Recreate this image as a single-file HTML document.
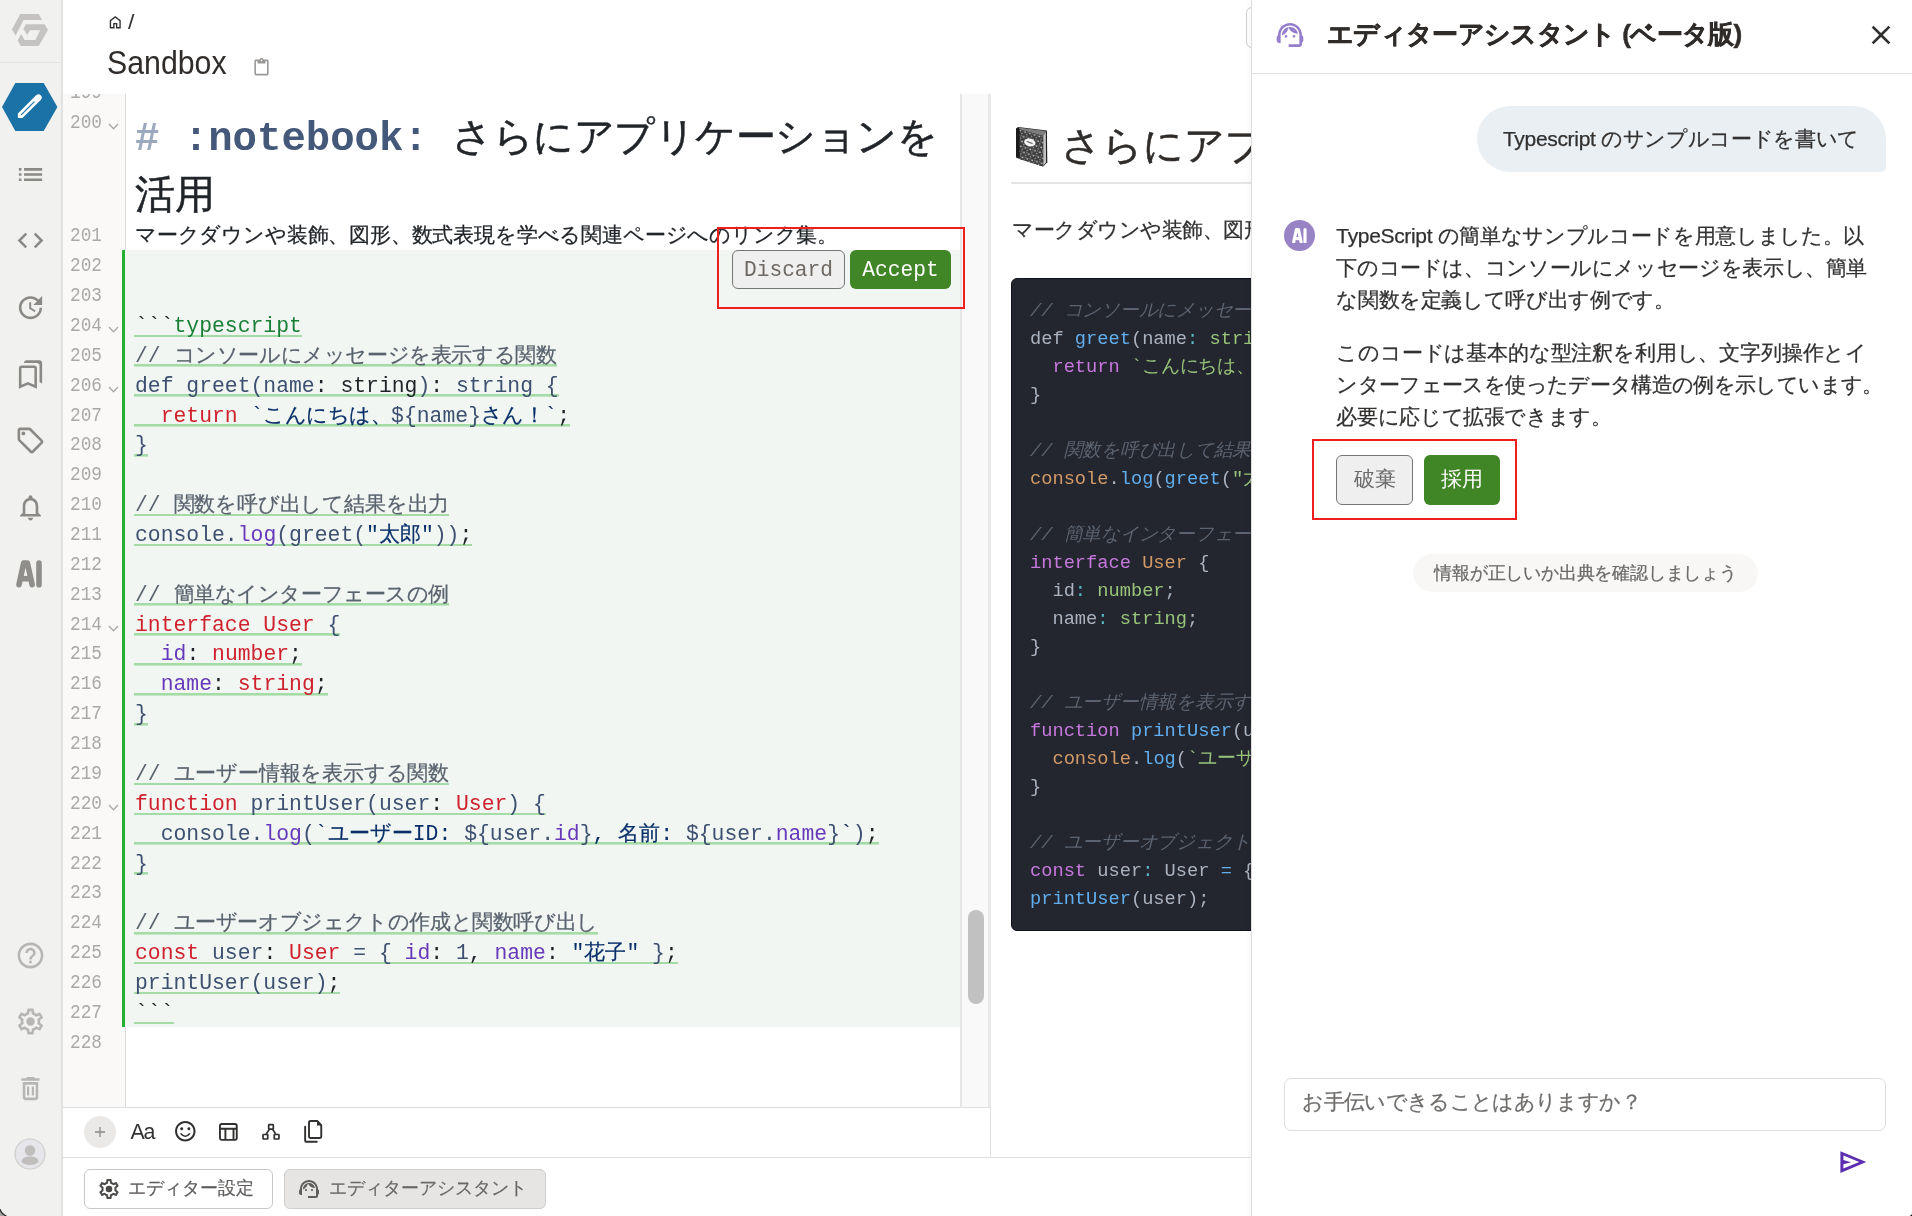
<!DOCTYPE html>
<html lang="ja">
<head>
<meta charset="utf-8">
<title>Sandbox - GROWI</title>
<style>
*{box-sizing:border-box;margin:0;padding:0}
html,body{width:1912px;height:1216px;overflow:hidden;background:#fff}
body{position:relative;will-change:transform;font-family:"Liberation Sans",sans-serif;color:#323130}
.abs{position:absolute}
svg{display:block}
.nw{white-space:nowrap}
.msg,#bubble,.cl .cj,#hint,#input,.jp{-webkit-text-stroke:.25px currentColor}
#h1 .cj{-webkit-text-stroke:.5px currentColor}
/* ---------- sidebar ---------- */
#sidebar{position:absolute;left:0;top:0;width:63px;height:1216px;background:#f1f1ef;border-right:2px solid #e3e2e0}
#sidebar .sep{position:absolute;left:0;top:62px;width:61px;height:1px;background:#e4e3e1}
#sidebar .ic{position:absolute;left:14.5px;width:31px;height:31px}
/* ---------- header ---------- */
#crumb{position:absolute;left:128px;top:11px;font-size:20px;line-height:22px;transform:scaleX(1.15);transform-origin:0 0;color:#323130;white-space:nowrap}
#title{position:absolute;left:107px;top:41px;font-size:32.5px;line-height:44px;color:#2f2c2a;white-space:nowrap;transform:scaleX(.932);transform-origin:0 50%}
/* ---------- editor ---------- */
#editor{position:absolute;left:63px;top:94px;width:897px;height:1013px;overflow:hidden;background:#fff}
#gutter{position:absolute;left:0;top:0;width:63px;height:1013px;background:#faf9f7;border-right:1px solid #dcdcdc}
.ln{position:absolute;left:0;width:39px;text-align:right;font-family:"Liberation Mono",monospace;font-size:17.8px;line-height:29.87px;height:29.87px;color:#a9a9a9;white-space:pre;transform:scaleY(1.1);transform-origin:0 21px;padding-top:2px}
.fold{position:absolute;left:45px}
#insbg{position:absolute;left:59px;width:839px;background:#f2f6f3;border-left:3px solid #24b030}
.cl{position:absolute;left:72px;height:29.87px;font-family:"Liberation Mono",monospace;font-size:21.4px;line-height:29.87px;white-space:pre;color:#3d5070}
.cl .u{display:inline-block;height:27.3px;line-height:32.5px;background:linear-gradient(#a4dba6,#a4dba6) left bottom/100% 2.6px no-repeat;margin-left:-1px;padding-left:1px;vertical-align:top}
.cj{font-family:"Liberation Sans",sans-serif;font-size:21.2px;line-height:0}
.k{color:#cf222e}.p{color:#6639ba}.s{color:#0a3069}.c{color:#59636e}.d{color:#1f2328}.g{color:#1a7f37}.n{color:#0550ae}
#h1{position:absolute;left:72px;font-family:"Liberation Mono",monospace;font-weight:bold;font-size:40.67px;line-height:58px;white-space:pre;color:#44597a}
#h1 .hs{color:#9ba8bd}
#h1 .cj{font-family:"Liberation Sans",sans-serif;font-weight:normal;font-size:40px;color:#212529;line-height:0;letter-spacing:-.47px}
.btn{position:absolute;border-radius:6px;text-align:center;white-space:nowrap}
#redbox1{position:absolute;left:717px;top:227px;width:248px;height:82px;border:2px solid #f01e1e}
#vsb{position:absolute;left:960px;top:94px;width:31px;height:1013px;background:#f9f9f9;border-left:2px solid #e6e6e6;border-right:3px solid #e8e8e8}
#vsb i{position:absolute;left:6px;top:816px;width:16px;height:94px;border-radius:8px;background:#c1c1c1}
/* ---------- toolbar ---------- */
#tb1{position:absolute;left:63px;top:1107px;width:928px;height:50px;border-top:1px solid #dfdfdf;border-right:1px solid #e2e2e2;background:#fff}
#tb2{position:absolute;left:63px;top:1157px;width:1188px;height:59px;border-top:1px solid #dfdfdf;background:#fff}
/* ---------- preview ---------- */
#preview{position:absolute;left:991px;top:94px;width:260px;height:1063px;overflow:hidden;background:#fff}
#pcode{position:absolute;left:20px;top:184px;width:300px;height:653px;background:#23262f;border:1px solid #10131b;border-radius:6px;font-family:"Liberation Mono",monospace;font-size:18.7px;line-height:28px;color:#abb2bf;white-space:pre;padding:18px 0 0 18px}
#pcode .cj{font-family:"Liberation Sans",sans-serif;font-size:18.67px;line-height:0;letter-spacing:-.25px}
#pcode .c{color:#5c6370;font-style:italic}.pk{color:#c678dd}.pf{color:#61aeee}.pg{color:#98c379}.po{color:#d19a66}.pb{color:#56b6c2}
/* ---------- assistant panel ---------- */
#panel{position:absolute;left:1251px;top:0;width:661px;height:1216px;background:#fff;border-left:1px solid #e0dfdd;box-shadow:-2px 0 4px rgba(0,0,0,.035)}
#phead{position:absolute;left:0;top:0;width:660px;height:74px;border-bottom:1px solid #e1e1e1}
#ptitle{position:absolute;left:75px;top:14px;font-size:26.2px;font-weight:bold;line-height:40px;color:#2f2c2a;white-space:nowrap;letter-spacing:-.67px;-webkit-text-stroke:.45px #2f2c2a}
#bubble{position:absolute;left:225px;top:106px;width:409px;height:66px;border-radius:33px 33px 5px 33px;background:#eaeff4;font-size:21px;line-height:66px;text-indent:26px;color:#323130;white-space:nowrap;letter-spacing:-.32px}
#ai{position:absolute;left:32px;top:220px;width:31px;height:31px;border-radius:50%;background:#9883c5;color:#fff;font-weight:bold;font-size:15px;line-height:31px;text-align:center}
.msg{position:absolute;left:84.300px;font-size:21px;line-height:32px;color:#323130;white-space:nowrap}
#redbox2{position:absolute;left:60px;top:439px;width:205px;height:81px;border:2px solid #f01e1e}
#hint{position:absolute;left:161px;top:554px;width:345px;letter-spacing:-.2px;height:38px;border-radius:19px;background:#f8f7f6;color:#6c6a68;font-size:17.7px;line-height:38px;text-align:center;white-space:nowrap}
#input{position:absolute;left:32.300px;top:1078px;width:602px;height:53px;border:1px solid #dddddd;border-radius:7px;font-size:21px;line-height:45px;color:#6f6d6b;padding-left:17px;white-space:nowrap;letter-spacing:-.65px}
</style>
</head>
<body>

<div class="abs" style="left:106.800px;top:13.800px"><svg width="16.5" height="16.5" viewBox="0 0 24 24" ><path fill="#323130" fill-rule="evenodd" d="M6 19h3v-6h6v6h3v-9l-6-4.500L6 10v9zm-2 2V9l8-6 8 6v12h-7v-6h-2v6H4z"/></svg></div>
<div id="crumb">/</div>
<div id="title">Sandbox</div>
<div class="abs" style="left:251.700px;top:57.600px"><svg width="19" height="19" viewBox="0 0 24 24" ><path fill="#9a9896" fill-rule="evenodd" d="M19 2h-4.180C14.400.840 13.300 0 12 0S9.600.840 9.180 2H5c-1.100 0-2 .900-2 2v16c0 1.100.900 2 2 2h14c1.100 0 2-.900 2-2V4c0-1.100-.900-2-2-2zm-7 0c.550 0 1 .450 1 1s-.450 1-1 1-1-.450-1-1 .450-1 1-1zm7 18H5V4h2v3h10V4h2v16z"/></svg></div>
<div class="abs" style="left:1246px;top:7px;width:60px;height:41px;border:1px solid #cdcccb;border-radius:6px;background:#fff"></div>
<div id="editor">
<div id="gutter"></div>
<div id="insbg" style="top:156.17px;height:776.62px"></div>
<div class="ln" style="top:-16.57px">199</div>
<div class="ln" style="top:12.70px">200</div>
<div class="ln" style="top:126.30px">201</div>
<div class="ln" style="top:156.17px">202</div>
<div class="ln" style="top:186.04px">203</div>
<div class="ln" style="top:215.91px">204</div>
<div class="ln" style="top:245.78px">205</div>
<div class="ln" style="top:275.65px">206</div>
<div class="ln" style="top:305.52px">207</div>
<div class="ln" style="top:335.39px">208</div>
<div class="ln" style="top:365.26px">209</div>
<div class="ln" style="top:395.13px">210</div>
<div class="ln" style="top:425.00px">211</div>
<div class="ln" style="top:454.87px">212</div>
<div class="ln" style="top:484.74px">213</div>
<div class="ln" style="top:514.61px">214</div>
<div class="ln" style="top:544.48px">215</div>
<div class="ln" style="top:574.35px">216</div>
<div class="ln" style="top:604.22px">217</div>
<div class="ln" style="top:634.09px">218</div>
<div class="ln" style="top:663.96px">219</div>
<div class="ln" style="top:693.83px">220</div>
<div class="ln" style="top:723.70px">221</div>
<div class="ln" style="top:753.57px">222</div>
<div class="ln" style="top:783.44px">223</div>
<div class="ln" style="top:813.31px">224</div>
<div class="ln" style="top:843.18px">225</div>
<div class="ln" style="top:873.05px">226</div>
<div class="ln" style="top:902.92px">227</div>
<div class="ln" style="top:932.79px">228</div>
<svg class="fold" style="top:29.20px" width="11" height="7" viewBox="0 0 11 7"><path d="M1 1L5.500 5.800L10 1" fill="none" stroke="#a9a9a9" stroke-width="1.300"/></svg>
<svg class="fold" style="top:232.41px" width="11" height="7" viewBox="0 0 11 7"><path d="M1 1L5.500 5.800L10 1" fill="none" stroke="#a9a9a9" stroke-width="1.300"/></svg>
<svg class="fold" style="top:292.15px" width="11" height="7" viewBox="0 0 11 7"><path d="M1 1L5.500 5.800L10 1" fill="none" stroke="#a9a9a9" stroke-width="1.300"/></svg>
<svg class="fold" style="top:531.11px" width="11" height="7" viewBox="0 0 11 7"><path d="M1 1L5.500 5.800L10 1" fill="none" stroke="#a9a9a9" stroke-width="1.300"/></svg>
<svg class="fold" style="top:710.33px" width="11" height="7" viewBox="0 0 11 7"><path d="M1 1L5.500 5.800L10 1" fill="none" stroke="#a9a9a9" stroke-width="1.300"/></svg>
<div id="h1" style="top:15.80px"><span class="hs">#</span> :notebook: <span class="cj">さらにアプリケーションを</span><br><span class="cj">活用</span></div>
<div class="cl" style="top:127.80px;color:#212529"><span class="cj" style="letter-spacing:-0.18px">マークダウンや装飾、図形、数式表現を学べる関連ページへのリンク集。</span></div>
<div class="cl" style="top:215.91px"><span class="u"><span class="d">```</span><span class="g">typescript</span></span></div>
<div class="cl" style="top:245.78px"><span class="u"><span class="c">// <span class="cj" style="letter-spacing:-0.39px">コンソールにメッセージを表示する関数</span></span></span></div>
<div class="cl" style="top:275.65px"><span class="u">def greet(name<span class="d">: string</span>)<span class="d">:</span> string {</span></div>
<div class="cl" style="top:305.52px"><span class="u">  <span class="k">return</span> <span class="s">`<span class="cj" style="letter-spacing:-0.55px">こんにちは、</span></span>${name}<span class="s"><span class="cj" style="letter-spacing:-0.55px">さん！</span>`</span><span class="d">;</span></span></div>
<div class="cl" style="top:335.39px"><span class="u">}</span></div>
<div class="cl" style="top:395.13px"><span class="u"><span class="c">// <span class="cj" style="letter-spacing:-0.18px">関数を呼び出して結果を出力</span></span></span></div>
<div class="cl" style="top:425.00px"><span class="u">console.<span class="p">log</span>(greet(<span class="s">"<span class="cj">太郎</span>"</span>))<span class="d">;</span></span></div>
<div class="cl" style="top:484.74px"><span class="u"><span class="c">// <span class="cj" style="letter-spacing:-0.42px">簡単なインターフェースの例</span></span></span></div>
<div class="cl" style="top:514.61px"><span class="u"><span class="k">interface User</span> {</span></div>
<div class="cl" style="top:544.48px"><span class="u">  <span class="p">id</span><span class="d">: </span><span class="k">number</span><span class="d">;</span></span></div>
<div class="cl" style="top:574.35px"><span class="u">  <span class="p">name</span><span class="d">: </span><span class="k">string</span><span class="d">;</span></span></div>
<div class="cl" style="top:604.22px"><span class="u">}</span></div>
<div class="cl" style="top:663.96px"><span class="u"><span class="c">// <span class="cj" style="letter-spacing:-0.2px">ユーザー情報を表示する関数</span></span></span></div>
<div class="cl" style="top:693.83px"><span class="u"><span class="k">function</span> printUser(user<span class="d">: </span><span class="k">User</span>) {</span></div>
<div class="cl" style="top:723.70px"><span class="u">  console.<span class="p">log</span>(<span class="s">`<span class="cj" style="letter-spacing:-0.2px">ユーザー</span>ID: </span>${user.<span class="p">id</span>}<span class="s">, <span class="cj">名前</span>: </span>${user.<span class="p">name</span>}<span class="s">`</span>)<span class="d">;</span></span></div>
<div class="cl" style="top:753.57px"><span class="u">}</span></div>
<div class="cl" style="top:813.31px"><span class="u"><span class="c">// <span class="cj" style="letter-spacing:-0.385px">ユーザーオブジェクトの作成と関数呼び出し</span></span></span></div>
<div class="cl" style="top:843.18px"><span class="u"><span class="k">const</span> user<span class="d">: </span><span class="k">User</span> = { <span class="p">id</span><span class="d">: </span>1<span class="d">, </span><span class="p">name</span><span class="d">: </span><span class="s">"<span class="cj">花子</span>"</span> }<span class="d">;</span></span></div>
<div class="cl" style="top:873.05px"><span class="u">printUser(user)<span class="d">;</span></span></div>
<div class="cl" style="top:902.92px"><span class="u"><span class="d">```</span></span></div>
</div>
<div class="btn" style="left:732px;top:250px;width:113px;height:39px;background:#efefef;border:1px solid #767676;color:#6e6863;font-family:'Liberation Mono',monospace;font-size:21.2px;line-height:39px">Discard</div>
<div class="btn" style="left:850px;top:250px;width:101px;height:39px;background:#408526;color:#fff;font-family:'Liberation Mono',monospace;font-size:21.2px;line-height:41px">Accept</div>
<div id="vsb"><i></i></div>
<div id="redbox1"></div>
<div id="preview">
<div class="abs nw" style="left:69.500px;top:22.800px;font-size:40px;line-height:56px;color:#2f2c2a;-webkit-text-stroke:.5px #2f2c2a">さらにアプリ</div>
<svg class="abs" style="left:19px;top:32px" width="40" height="42" viewBox="0 0 40 42"><defs><pattern id="mb" width="5" height="5" patternUnits="userSpaceOnUse" patternTransform="rotate(17)"><rect width="5" height="5" fill="#3a3a3a"/><circle cx="1.200" cy="1.300" r=".900" fill="#d2d2d2"/><circle cx="3.600" cy="3.500" r=".800" fill="#adadad"/><circle cx="3.900" cy=".800" r=".500" fill="#e4e4e4"/></pattern></defs><path d="M6 2.600L8 1L36.900 4.400L37.300 36.200L33.200 40.400L9.700 33L6 31.600Z" fill="#1c1c1c"/><path d="M9.700 3.500L8.600 1.600L36 4.900L33.200 10Z" fill="#7d7d7d"/><path d="M33.200 10L35.800 5.800L36.100 36.200L33.200 40Z" fill="#c4c4c4"/><path d="M9.700 3.500L33.200 10V40.400L9.700 33Z" fill="url(#mb)"/><ellipse cx="19.800" cy="16.500" rx="5.700" ry="3.800" fill="#f4f4f4" transform="rotate(12 19.800 16.500)"/><path d="M16.800 15.300L22.600 17.700" stroke="#777" stroke-width="1.400"/></svg>
<div class="abs" style="left:20px;top:88px;width:260px;height:2px;background:#e4e4e4"></div>
<div class="abs nw" style="left:21px;top:120px;font-size:21.300px;line-height:32px;color:#323130;letter-spacing:-.5px;-webkit-text-stroke:.25px #323130">マークダウンや装飾、図形、数式</div>
<div id="pcode"><span class="c">// <span class="cj">コンソールにメッセージを表示する関数</span></span>
def <span class="pf">greet</span>(name<span class="pb">:</span> <span class="pg">string</span>)
  <span class="pk">return</span> <span class="pg">`<span class="cj">こんにちは、</span>${name}</span>
}

<span class="c">// <span class="cj">関数を呼び出して結果を出力</span></span>
<span class="po">console</span>.<span class="pf">log</span>(<span class="pf">greet</span>(<span class="pg">"<span class="cj">太郎</span>"</span>));

<span class="c">// <span class="cj">簡単なインターフェースの例</span></span>
<span class="pk">interface</span> <span class="po">User</span> {
  id<span class="pb">:</span> <span class="pg">number</span>;
  name<span class="pb">:</span> <span class="pg">string</span>;
}

<span class="c">// <span class="cj">ユーザー情報を表示する関数</span></span>
<span class="pk">function</span> <span class="pf">printUser</span>(user<span class="pb">:</span> User) {
  <span class="po">console</span>.<span class="pf">log</span>(<span class="pg">`<span class="cj">ユーザー</span>ID: ${user.id}</span>
}

<span class="c">// <span class="cj">ユーザーオブジェクトの作成と関数呼び出し</span></span>
<span class="pk">const</span> user<span class="pb">:</span> User <span class="pf">=</span> { id: 1 };
<span class="pf">printUser</span>(user);</div>
</div>
<div id="tb1">
<div class="abs" style="left:21px;top:8px;width:32px;height:32px;border-radius:50%;background:#eae9e7"></div>
<svg class="abs" style="left:31px;top:18px" width="12" height="12" viewBox="0 0 12 12"><path d="M6 1V11M1 6H11" stroke="#8a8886" stroke-width="1.300" fill="none"/></svg>
<div class="abs nw" style="left:67.500px;top:10.200px;font-size:21.4px;line-height:28px;color:#323130;letter-spacing:-1.2px">Aa</div>
<div class="abs" style="left:110.200px;top:11px"><svg width="24.6" height="24.6" viewBox="0 0 24 24" ><path fill="#323130" fill-rule="evenodd" d="M15.500 11c.830 0 1.500-.670 1.500-1.500S16.330 8 15.500 8 14 8.670 14 9.500s.670 1.500 1.500 1.500zm-7 0c.830 0 1.500-.670 1.500-1.500S9.330 8 8.500 8 7 8.670 7 9.500 7.670 11 8.500 11zM12 16c-1.480 0-2.750-.810-3.450-2H6.880c.800 2.050 2.790 3.500 5.120 3.500s4.320-1.450 5.120-3.500h-1.670c-.690 1.190-1.970 2-3.450 2zm-.010-14C6.470 2 2 6.480 2 12s4.470 10 9.990 10C17.520 22 22 17.520 22 12S17.520 2 11.990 2zM12 20c-4.420 0-8-3.580-8-8s3.580-8 8-8 8 3.580 8 8-3.580 8-8 8z"/></svg></div>
<svg class="abs" style="left:155px;top:14.200px" width="20" height="20" viewBox="0 0 20 20"><g fill="none" stroke="#323130" stroke-width="1.900"><rect x="1.950" y="1.950" width="16.800" height="15.900" rx="1.800"/><path d="M1.950 6.700H18.750M7.400 6.700V17.800M15.500 6.700V17.800"/></g></svg>
<svg class="abs" style="left:198px;top:14.600px" width="20" height="18" viewBox="0 0 20 18"><g fill="none" stroke="#323130" stroke-width="1.700"><rect x="7.700" y="1.700" width="4.600" height="4.400" rx=".400"/><rect x="2.050" y="11.500" width="4.700" height="4.500" rx=".400"/><rect x="13.250" y="11.500" width="4.700" height="4.500" rx=".400"/><path d="M8.200 6.600L5.300 11M11.800 6.600L14.700 11"/></g></svg>
<svg class="abs" style="left:240px;top:10.800px" width="21" height="25.200" viewBox="0 0 21 24" preserveAspectRatio="none"><g fill="none" stroke="#323130" stroke-width="1.900" stroke-linejoin="round"><path d="M7.500 1.950H14.300L18.250 5.900V16.600a1.500 1.500 0 0 1 -1.500 1.500H7.500a1.500 1.500 0 0 1 -1.500 -1.500V3.450a1.500 1.500 0 0 1 1.500 -1.500Z"/><path d="M2.150 7.400V20.200a1.500 1.500 0 0 0 1.500 1.500H13.800" stroke-linecap="round"/></g><path d="M14 1.600L18.700 6.300H14Z" fill="#323130"/></svg>
</div>
<div id="tb2">
<div class="abs" style="left:21px;top:11px;width:189px;height:40px;border:1px solid #c9c8c6;border-radius:6px;background:#fff"></div>
<div class="abs" style="left:33.500px;top:18.500px"><svg width="24" height="24" viewBox="0 0 24 24" ><path fill="#4c4a48" fill-rule="evenodd" d="M19.43 12.98c.04-.32.07-.64.07-.98 0-.34-.03-.66-.07-.98l2.11-1.65c.19-.15.24-.42.12-.64l-2-3.46c-.09-.16-.26-.25-.44-.25-.06 0-.12.01-.17.03l-2.49 1c-.52-.4-1.08-.73-1.69-.98l-.38-2.65C14.46 2.18 14.25 2 14 2h-4c-.25 0-.46.18-.49.42l-.38 2.65c-.61.25-1.17.59-1.69.98l-2.49-1c-.06-.02-.12-.03-.18-.03-.17 0-.34.09-.43.25l-2 3.46c-.13.22-.07.49.12.64l2.11 1.65c-.04.32-.07.65-.07.98 0 .33.03.66.07.98l-2.11 1.65c-.19.15-.24.42-.12.64l2 3.46c.09.16.26.25.44.25.06 0 .12-.01.17-.03l2.49-1c.52.4 1.08.73 1.69.98l.38 2.65c.03.24.24.42.49.42h4c.25 0 .46-.18.49-.42l.38-2.65c.61-.25 1.17-.59 1.69-.98l2.49 1c.06.02.12.03.18.03.17 0 .34-.09.43-.25l2-3.46c.12-.22.07-.49-.12-.64l-2.11-1.65zm-1.98-1.71c.04.31.05.52.05.73 0 .21-.02.43-.05.73l-.14 1.13.89.7 1.08.84-.7 1.21-1.27-.51-1.04-.42-.9.68c-.43.32-.84.56-1.25.73l-1.06.43-.16 1.13-.2 1.35h-1.4l-.19-1.35-.16-1.13-1.06-.43c-.43-.18-.83-.41-1.23-.71l-.91-.7-1.06.43-1.27.51-.7-1.21 1.08-.84.89-.7-.14-1.13c-.03-.31-.05-.54-.05-.74s.02-.43.05-.73l.14-1.13-.89-.7-1.08-.84.7-1.21 1.27.51 1.04.42.9-.68c.43-.32.84-.56 1.25-.73l1.06-.43.16-1.13.2-1.35h1.39l.19 1.35.16 1.13 1.06.43c.43.18.83.41 1.23.71l.91.7 1.06-.43 1.27-.51.7 1.21-1.07.85-.89.7.14 1.13zM12 8.700a3.300 3.300 0 1 0 0 6.600a3.300 3.300 0 0 0 0-6.600z"/></svg></div>
<div class="abs nw" style="left:65px;top:15px;font-size:18.3px;line-height:30px;color:#5f5d5b;-webkit-text-stroke:.2px #5f5d5b">エディター設定</div>
<div class="abs" style="left:221px;top:11px;width:262px;height:40px;border:1px solid #cfcecc;border-radius:6px;background:#e6e5e3"></div>
<div class="abs" style="left:233.500px;top:18.500px"><svg width="24" height="24" viewBox="0 0 24 24" ><path fill="#5f5d5b" fill-rule="evenodd" d="M21 12.220C21 6.730 16.740 3 12 3c-4.690 0-9 3.650-9 9.280-.600.340-1 .980-1 1.720v2c0 1.100.900 2 2 2h1v-6.100c0-3.870 3.130-7 7-7s7 3.130 7 7V19h-8v2h8c1.100 0 2-.900 2-2v-1.220c.590-.310 1-.920 1-1.640v-2.300c0-.700-.410-1.310-1-1.620zM9 14c.550 0 1-.450 1-1s-.450-1-1-1-1 .450-1 1 .450 1 1 1zm6 0c.550 0 1-.450 1-1s-.450-1-1-1-1 .450-1 1 .450 1 1 1zM18 11.030C17.520 8.180 15.040 6 12.050 6c-3.030 0-6.290 2.510-6.030 6.450 2.470-1.010 4.330-3.210 4.860-5.890 1.310 2.630 4 4.440 7.120 4.470z"/></svg></div>
<div class="abs nw" style="left:266px;top:15px;font-size:18.3px;line-height:30px;color:#6a6866;-webkit-text-stroke:.2px #6a6866">エディターアシスタント</div>
</div>
<div id="sidebar">
<svg class="abs" style="left:11px;top:13px" width="38" height="34" viewBox="0 0 38 34"><g fill="#c4c3c1"><path d="M9.200 1H27.600L31 7H12.600L4.600 22.600L1 16.600Z"/><path d="M14.800 11.200H33.600L37 16.800L27.800 33H9.800L6.600 27.600L10.200 21L13.600 27H24.400L29.200 17.200H19L16.200 22L12.400 16Z"/></g></svg>
<div class="sep"></div>
<svg class="abs" style="left:2px;top:83px" width="56" height="48" viewBox="0 0 56 48"><path d="M13.300 0H41.700L55.400 24L41.700 48H13.300L0 24Z" fill="#1a72a6"/><g transform="translate(15.900 35.100) rotate(-45)"><path d="M0 0L3.250 -3.250H29A3.250 3.250 0 0 1 29 3.250H3.250Z" fill="#fff"/><path d="M5 0H23" stroke="#1a72a6" stroke-width="1.200" stroke-linecap="round"/></g></svg>
<div class="ic" style="top:158.5px"><svg width="31" height="31" viewBox="0 0 24 24" ><path fill="#8b8986" fill-rule="evenodd" d="M3 13h2v-2H3v2zm0 4h2v-2H3v2zm0-8h2V7H3v2zm4 4h14v-2H7v2zm0 4h14v-2H7v2zM7 7v2h14V7H7z"/></svg></div>
<div class="ic" style="top:224.5px"><svg width="31" height="31" viewBox="0 0 24 24" ><path fill="#8b8986" fill-rule="evenodd" d="M9.4 16.6L4.8 12l4.6-4.6L8 6l-6 6 6 6 1.4-1.4zm5.2 0l4.6-4.6-4.6-4.6L16 6l6 6-6 6-1.4-1.4z"/></svg></div>
<div class="ic" style="top:291.5px"><svg width="31" height="31" viewBox="0 0 24 24" ><path fill="#8b8986" fill-rule="evenodd" d="M21 10.12h-6.78l2.74-2.82c-2.73-2.7-7.15-2.8-9.88-.1-2.73 2.71-2.73 7.08 0 9.79s7.15 2.71 9.88 0C18.32 15.65 19 14.08 19 12.1h2c0 1.98-.88 4.55-2.64 6.29-3.51 3.48-9.21 3.48-12.72 0-3.5-3.47-3.53-9.11-.02-12.58s9.14-3.47 12.65 0L21 3v7.12zM12.5 8v4.25l3.5 2.08-.72 1.21L11 13V8h1.5z"/></svg></div>
<div class="ic" style="top:358.5px"><svg width="31" height="31" viewBox="0 0 24 24" ><path fill="#8b8986" fill-rule="evenodd" d="M15 7v12.97l-4.21-1.81-.79-.34-.79.34L5 19.97V7h10m4-6H8.99C7.89 1 7 1.9 7 3h10c1.1 0 2 .9 2 2v13l2 1V3c0-1.1-.9-2-2-2zm-4 4H5c-1.1 0-2 .9-2 2v16l7-3 7 3V7c0-1.1-.9-2-2-2z"/></svg></div>
<div class="ic" style="top:424.5px"><svg width="31" height="31" viewBox="0 0 24 24" ><path fill="#8b8986" fill-rule="evenodd" d="M21.41 11.58l-9-9C12.05 2.22 11.55 2 11 2H4c-1.1 0-2 .9-2 2v7c0 .55.22 1.05.59 1.42l9 9c.36.36.86.58 1.41.58s1.05-.22 1.41-.59l7-7c.37-.36.59-.86.59-1.41s-.23-1.06-.59-1.42zM13 20.01L4 11V4h7v-.01l9 9-7 7.02zM6.5 5a1.5 1.5 0 100 3 1.5 1.5 0 000-3z"/></svg></div>
<div class="ic" style="top:491.5px"><svg width="31" height="31" viewBox="0 0 24 24" ><path fill="#8b8986" fill-rule="evenodd" d="M12 22c1.1 0 2-.9 2-2h-4c0 1.1.9 2 2 2zm6-6v-5c0-3.07-1.63-5.64-4.5-6.32V4c0-.83-.67-1.5-1.5-1.5s-1.5.67-1.5 1.5v.68C7.64 5.36 6 7.92 6 11v5l-2 2v1h16v-1l-2-2zm-2 1H8v-6c0-2.48 1.51-4.5 4-4.5s4 2.02 4 4.5v6z"/></svg></div>
<svg class="abs" style="left:16px;top:560px" width="27" height="28" viewBox="0 0 27 28" role="img" aria-label="AI"><g fill="none" stroke="#908e8a" stroke-width="5.600" stroke-linecap="round" stroke-linejoin="round"><path d="M3 24.700L7.700 3H11.400L16.100 24.700"/><path d="M23 3V24.700"/></g><path d="M6 18.700H13" stroke="#908e8a" stroke-width="5.600" fill="none"/></svg>
<div class="ic" style="top:939.5px"><svg width="31" height="31" viewBox="0 0 24 24" ><path fill="#b7b6b4" fill-rule="evenodd" d="M11 18h2v-2h-2v2zm1-16C6.48 2 2 6.48 2 12s4.48 10 10 10 10-4.48 10-10S17.52 2 12 2zm0 18c-4.41 0-8-3.59-8-8s3.59-8 8-8 8 3.59 8 8-3.59 8-8 8zm0-14c-2.21 0-4 1.79-4 4h2c0-1.1.9-2 2-2s2 .9 2 2c0 2-3 1.75-3 5h2c0-2.25 3-2.5 3-5 0-2.21-1.79-4-4-4z"/></svg></div>
<div class="ic" style="top:1005.5px"><svg width="31" height="31" viewBox="0 0 24 24" ><path fill="#b7b6b4" fill-rule="evenodd" d="M19.43 12.98c.04-.32.07-.64.07-.98 0-.34-.03-.66-.07-.98l2.11-1.65c.19-.15.24-.42.12-.64l-2-3.46c-.09-.16-.26-.25-.44-.25-.06 0-.12.01-.17.03l-2.49 1c-.52-.4-1.08-.73-1.69-.98l-.38-2.65C14.46 2.18 14.25 2 14 2h-4c-.25 0-.46.18-.49.42l-.38 2.65c-.61.25-1.17.59-1.69.98l-2.49-1c-.06-.02-.12-.03-.18-.03-.17 0-.34.09-.43.25l-2 3.46c-.13.22-.07.49.12.64l2.11 1.65c-.04.32-.07.65-.07.98 0 .33.03.66.07.98l-2.11 1.65c-.19.15-.24.42-.12.64l2 3.46c.09.16.26.25.44.25.06 0 .12-.01.17-.03l2.49-1c.52.4 1.08.73 1.69.98l.38 2.65c.03.24.24.42.49.42h4c.25 0 .46-.18.49-.42l.38-2.65c.61-.25 1.17-.59 1.69-.98l2.49 1c.06.02.12.03.18.03.17 0 .34-.09.43-.25l2-3.46c.12-.22.07-.49-.12-.64l-2.11-1.65zm-1.98-1.71c.04.31.05.52.05.73 0 .21-.02.43-.05.73l-.14 1.13.89.7 1.08.84-.7 1.21-1.27-.51-1.04-.42-.9.68c-.43.32-.84.56-1.25.73l-1.06.43-.16 1.13-.2 1.35h-1.4l-.19-1.35-.16-1.13-1.06-.43c-.43-.18-.83-.41-1.23-.71l-.91-.7-1.06.43-1.27.51-.7-1.21 1.08-.84.89-.7-.14-1.13c-.03-.31-.05-.54-.05-.74s.02-.43.05-.73l.14-1.13-.89-.7-1.08-.84.7-1.21 1.27.51 1.04.42.9-.68c.43-.32.84-.56 1.25-.73l1.06-.43.16-1.13.2-1.35h1.39l.19 1.35.16 1.13 1.06.43c.43.18.83.41 1.23.71l.91.7 1.06-.43 1.27-.51.7 1.21-1.07.85-.89.7.14 1.13zM12 8.700a3.300 3.300 0 1 0 0 6.600a3.300 3.300 0 0 0 0-6.600z"/></svg></div>
<div class="ic" style="top:1072.5px"><svg width="31" height="31" viewBox="0 0 24 24" ><path fill="#b7b6b4" fill-rule="evenodd" d="M16 9v10H8V9h8m-1.500-6h-5l-1 1H5v2h14V4h-3.500l-1-1zM18 7H6v12c0 1.100.900 2 2 2h8c1.100 0 2-.900 2-2V7zM9.300 10.500h1.700v7H9.300zm3.700 0h1.700v7H13z"/></svg></div>
<svg class="abs" style="left:14px;top:1138px" width="32" height="32" viewBox="0 0 32 32"><circle cx="16" cy="16" r="15" fill="#e6e5ea" stroke="#cfcecc" stroke-width="1.200"/><circle cx="16" cy="12.500" r="5.200" fill="#bfbebc"/><path d="M7.500 24c0-4 4-5.600 8.500-5.600s8.500 1.600 8.500 5.600c-2 2-5 3-8.500 3s-6.500-1-8.500-3z" fill="#bfbebc"/></svg>
<svg class="abs" style="left:0;top:1208px" width="8" height="8" viewBox="0 0 8 8"><path d="M0 1.200C.800 4.200 3.200 6.800 6.400 8H0Z" fill="#a6a6a6"/><path d="M0 1.200C.800 4.200 3.200 6.800 6.400 8" fill="none" stroke="#2c2c2c" stroke-width="1.300"/></svg>
</div>
<div id="panel">
<div id="phead"></div>
<div class="abs" style="left:22px;top:19px"><svg width="32" height="32" viewBox="0 0 24 24" ><path fill="#957fcb" fill-rule="evenodd" d="M21 12.220C21 6.730 16.740 3 12 3c-4.690 0-9 3.650-9 9.280-.600.340-1 .980-1 1.720v2c0 1.100.900 2 2 2h1v-6.100c0-3.870 3.130-7 7-7s7 3.130 7 7V19h-8v2h8c1.100 0 2-.900 2-2v-1.220c.590-.310 1-.920 1-1.640v-2.300c0-.700-.410-1.310-1-1.620zM9 14c.550 0 1-.450 1-1s-.450-1-1-1-1 .450-1 1 .450 1 1 1zm6 0c.550 0 1-.450 1-1s-.450-1-1-1-1 .450-1 1 .450 1 1 1zM18 11.030C17.520 8.180 15.040 6 12.050 6c-3.030 0-6.290 2.510-6.030 6.450 2.470-1.010 4.330-3.210 4.860-5.890 1.310 2.630 4 4.440 7.120 4.470z"/></svg></div>
<div id="ptitle">エディターアシスタント (ベータ版)</div>
<div class="abs" style="left:613px;top:19px"><svg width="32" height="32" viewBox="0 0 24 24" ><path fill="#323130" fill-rule="evenodd" d="M19 6.41L17.590 5 12 10.590 6.410 5 5 6.410 10.590 12 5 17.590 6.410 19 12 13.410 17.590 19 19 17.590 13.410 12z"/></svg></div>
<div id="bubble">Typescript のサンプルコードを書いて</div>
<div id="ai"><svg class="abs" style="left:7.900px;top:7.600px" width="15.300" height="15.800" viewBox="0 0 27 28" role="img" aria-label="AI"><g fill="none" stroke="#fff" stroke-width="5.600" stroke-linecap="round" stroke-linejoin="round"><path d="M3 24.700L7.700 3H11.400L16.100 24.700"/><path d="M23 3V24.700"/></g><path d="M6 18.700H13" stroke="#fff" stroke-width="5.600" fill="none"/></svg></div>
<div class="msg" style="top:220px"><span style="letter-spacing:-.335px">TypeScript の簡単なサンプルコードを用意しました。以</span><br><span style="letter-spacing:-.37px">下のコードは、コンソールにメッセージを表示し、簡単</span><br><span style="letter-spacing:-.36px">な関数を定義して呼び出す例です。</span></div>
<div class="msg" style="top:337px"><span style="letter-spacing:-.17px">このコードは基本的な型注釈を利用し、文字列操作とイ</span><br><span style="letter-spacing:-.64px">ンターフェースを使ったデータ構造の例を示しています。</span><br><span style="letter-spacing:-.35px">必要に応じて拡張できます。</span></div>
<div class="btn" style="left:84.300px;top:455px;width:77px;height:50px;background:#efefef;border:1px solid #767676;color:#6b6b6b;font-size:21px;line-height:46px">破棄</div>
<div class="btn" style="left:172.200px;top:455px;width:76px;height:50px;background:#408526;color:#fff;font-size:21px;line-height:48px">採用</div>
<div id="redbox2"></div>
<div id="hint">情報が正しいか出典を確認しましょう</div>
<div id="input">お手伝いできることはありますか？</div>
<svg class="abs" style="left:587px;top:1150px" width="30" height="24" viewBox="0 0 30 24"><path fill="#5b2eb0" fill-rule="evenodd" d="M1.400 1.200L27.300 12.050L1.400 22.900ZM4.400 5.600V10.100L12.100 12.200L4.400 14.200V18.500L20.200 12.050Z"/></svg>
</div>
<svg class="abs" style="left:1909px;top:1213px" width="3" height="3" viewBox="0 0 3 3"><path d="M3 .600V3H.600C2 2.600 2.600 2 3 .600Z" fill="#111"/></svg>
</body>
</html>
